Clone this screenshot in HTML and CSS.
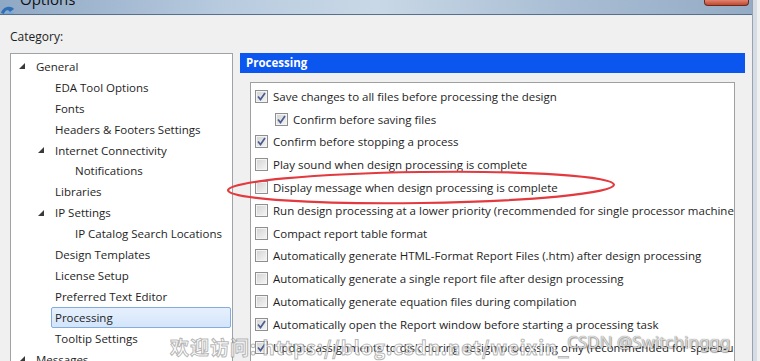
FILE: index.html
```html
<!DOCTYPE html>
<html lang="en">
<head>
<meta charset="UTF-8">
<meta name="viewport" content="width=device-width, initial-scale=1.0">
<title>Options</title>
<link rel="stylesheet" href="styles.css">
</head>
<body>
<div class="window">
    <div class="titlebar">
        <svg class="app-icon" width="16" height="16" viewBox="0 0 16 16">
            <path d="M1 9 C3 2, 11 1, 14 5 L10 8 C8 5, 5 6, 4 10 Z" fill="#2f6fb8"/>
            <path d="M4 10 C6 14, 12 13, 14 9 L10 8 Z" fill="#6fa7dc"/>
        </svg>
        <span class="title">Options</span>
        <div class="close-btn"></div>
    </div>
    <div class="content">
        <div class="label">Category:</div>
        <div class="main">
            <div class="tree">
                <div class="node lvl0"><span class="arrow"><svg width="6" height="6" viewBox="0 0 6 6"><polygon points="6,0 6,6 0,6"/></svg></span><span class="txt">General</span></div>
                <div class="node lvl1"><span class="arrow"></span><span class="txt">EDA Tool Options</span></div>
                <div class="node lvl1"><span class="arrow"></span><span class="txt">Fonts</span></div>
                <div class="node lvl1"><span class="arrow"></span><span class="txt">Headers &amp; Footers Settings</span></div>
                <div class="node lvl1"><span class="arrow"><svg width="6" height="6" viewBox="0 0 6 6"><polygon points="6,0 6,6 0,6"/></svg></span><span class="txt">Internet Connectivity</span></div>
                <div class="node lvl2"><span class="arrow"></span><span class="txt">Notifications</span></div>
                <div class="node lvl1"><span class="arrow"></span><span class="txt">Libraries</span></div>
                <div class="node lvl1"><span class="arrow"><svg width="6" height="6" viewBox="0 0 6 6"><polygon points="6,0 6,6 0,6"/></svg></span><span class="txt">IP Settings</span></div>
                <div class="node lvl2"><span class="arrow"></span><span class="txt">IP Catalog Search Locations</span></div>
                <div class="node lvl1"><span class="arrow"></span><span class="txt">Design Templates</span></div>
                <div class="node lvl1"><span class="arrow"></span><span class="txt">License Setup</span></div>
                <div class="node lvl1"><span class="arrow"></span><span class="txt">Preferred Text Editor</span></div>
                <div class="node lvl1 selected"><span class="arrow"></span><span class="txt">Processing</span></div>
                <div class="node lvl1"><span class="arrow"></span><span class="txt">Tooltip Settings</span></div>
                <div class="node lvl0"><span class="arrow"><svg width="6" height="6" viewBox="0 0 6 6"><polygon points="6,0 6,6 0,6"/></svg></span><span class="txt">Messages</span></div>
            </div>
            <div class="panel">
                <div class="panel-head">Processing</div>
                <div class="options">
                    <div class="opt"><span class="box checked"><svg width="11" height="11" viewBox="0 0 11 11"><path d="M2 5.5 L4.5 8.5 L9 2"/></svg></span>Save changes to all files before processing the design</div>
                    <div class="opt sub"><span class="box checked"><svg width="11" height="11" viewBox="0 0 11 11"><path d="M2 5.5 L4.5 8.5 L9 2"/></svg></span>Confirm before saving files</div>
                    <div class="opt"><span class="box checked"><svg width="11" height="11" viewBox="0 0 11 11"><path d="M2 5.5 L4.5 8.5 L9 2"/></svg></span>Confirm before stopping a process</div>
                    <div class="opt"><span class="box"></span>Play sound when design processing is complete</div>
                    <div class="opt"><span class="box"></span>Display message when design processing is complete</div>
                    <div class="opt"><span class="box"></span>Run design processing at a lower priority (recommended for single processor machines)</div>
                    <div class="opt"><span class="box"></span>Compact report table format</div>
                    <div class="opt"><span class="box"></span>Automatically generate HTML-Format Report Files (.htm) after design processing</div>
                    <div class="opt"><span class="box"></span>Automatically generate a single report file after design processing</div>
                    <div class="opt"><span class="box"></span>Automatically generate equation files during compilation</div>
                    <div class="opt"><span class="box checked"><svg width="11" height="11" viewBox="0 0 11 11"><path d="M2 5.5 L4.5 8.5 L9 2"/></svg></span>Automatically open the Report window before starting a processing task</div>
                    <div class="opt"><span class="box checked"><svg width="11" height="11" viewBox="0 0 11 11"><path d="M2 5.5 L4.5 8.5 L9 2"/></svg></span>Update assignments to disk during design processing only (recommended for speed-up)</div>
                </div>
            </div>
        </div>
    </div>
</div>

<!-- red mark drawn over the screenshot -->
<svg class="annotation" width="760" height="361" viewBox="0 0 760 361">
    <ellipse cx="421" cy="187.5" rx="193" ry="15.5" transform="rotate(-0.8 421 187.5)"/>
</svg>

<div class="watermark">欢迎访问: https://blog.csdn.net/weixin_</div>
<div class="csdn-mark">CSDN @Switchinggg</div>
</body>
</html>
```

FILE: styles.css
```css
body {
    margin: 0;
    width: 760px;
    height: 361px;
    overflow: hidden;
    background-color: #f0f0f0;
    font-family: 'Open Sans', 'Noto Sans', sans-serif;
    font-size: 11.5px;
    color: #1e1e1e;
    position: relative;
}
.window {
    width: 752px;
    height: 361px;
    border-right: 1px solid #9aa3ad;
    box-shadow: 4px 0 0 #d5dce4;
}
.titlebar {
    display: flex;
    align-items: flex-end;
    height: 14px;
    background: linear-gradient(to right, #8fa8c4 0%, #b8cbdf 30%, #c9d8e6 50%, #a9bed4 75%, #94abc5 100%);
    border-bottom: 1px solid #5d6f84;
    box-shadow: 0 1px 0 #e9eef3;
    overflow: hidden;
}
.app-icon {
    margin: 0 4px -6px 0;
}
.title {
    font-family: 'Open Sans', sans-serif;
    font-size: 15px;
    line-height: 15px;
    color: #111;
    margin-bottom: 7px;
}
.close-btn {
    margin-left: auto;
    margin-right: 3px;
    align-self: flex-start;
    width: 43px;
    height: 5px;
    background: linear-gradient(#e08470, #c2482f);
    border: 1px solid #6b2a1e;
    border-top: none;
    border-radius: 0 0 4px 4px;
}
.content {
    padding: 0 0 0 10px;
}
.label {
    font-size: 12px;
    height: 38px;
    line-height: 44px;
}
.main {
    display: flex;
    gap: 7px;
}
.tree {
    width: 221px;
    height: 320px;
    background-color: #ffffff;
    border: 1px solid #9ea3aa;
    padding-top: 2px;
    box-sizing: content-box;
}
.node {
    display: flex;
    align-items: stretch;
    height: 20.92px;
    white-space: nowrap;
}
.lvl0 { padding-left: 7px; }
.lvl1 { padding-left: 26px; }
.lvl2 { padding-left: 46px; }
.arrow {
    width: 17px;
    flex: none;
    display: flex;
    align-items: center;
}
.arrow svg {
    margin-left: 1px;
    fill: #3a3a3a;
}
.txt {
    flex: 1;
    display: flex;
    align-items: center;
    margin-left: -3px;
    padding-left: 3px;
    margin-right: 1px;
    border: 1px solid transparent;
    border-radius: 2px;
}
.selected .txt {
    background: linear-gradient(#e6f0fc, #d3e5fb);
    border-color: #84acdd;
}
.panel {
    width: 505px;
}
.panel-head {
    height: 20px;
    line-height: 20px;
    background-color: #0b56ef;
    color: #ffffff;
    font-weight: bold;
    font-size: 11.5px;
    padding-left: 6px;
}
.options {
    margin: 9px 10px 0 10px;
    height: 300px;
    background-color: #ffffff;
    border: 1px solid #a0a0a0;
    padding-top: 2px;
    overflow: hidden;
}
.opt {
    display: flex;
    align-items: center;
    height: 22.8px;
    padding-left: 4px;
    white-space: nowrap;
}
.opt.sub {
    padding-left: 24px;
}
.box {
    width: 11px;
    height: 11px;
    margin-right: 5px;
    flex: none;
    border: 1px solid #8e8f8f;
    background: linear-gradient(135deg, #d2d2d2, #f6f6f6);
    box-shadow: inset 0 0 0 1px #f4f4f4;
}
.box svg {
    display: block;
    fill: none;
    stroke: #4a5c91;
    stroke-width: 1.7;
}
.annotation {
    position: absolute;
    left: 0;
    top: 0;
    pointer-events: none;
}
.annotation ellipse {
    fill: none;
    stroke: #e23a3f;
    stroke-width: 2.2;
}
.watermark {
    position: absolute;
    left: 170px;
    top: 333px;
    font-family: 'Noto Sans CJK SC', 'Noto Sans', sans-serif;
    font-size: 19px;
    font-weight: bold;
    color: rgba(255, 255, 255, 0.75);
    -webkit-text-stroke: 1px rgba(120, 120, 120, 0.55);
    letter-spacing: 1px;
    white-space: nowrap;
}
.csdn-mark {
    position: absolute;
    left: 567px;
    top: 330px;
    font-family: 'Noto Sans', sans-serif;
    font-size: 17px;
    color: rgba(235, 235, 235, 0.85);
    text-shadow: 0 0 1px #666, 1px 1px 1px rgba(0, 0, 0, 0.35);
    white-space: nowrap;
}
```
